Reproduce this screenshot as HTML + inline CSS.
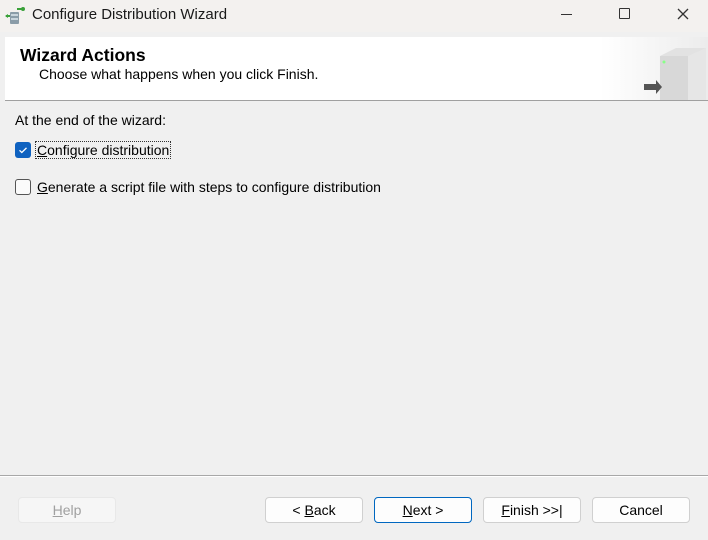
<!DOCTYPE html>
<html><head><style>
*{margin:0;padding:0;box-sizing:border-box}
body{width:708px;height:540px;background:#f0f0f0;font-family:"Liberation Sans",sans-serif;font-size:14px;color:#000;position:relative;overflow:hidden}
.abs{position:absolute}
.title{left:0;top:0;width:708px;height:32px;background:#f3f1ef}
.btn{position:absolute;top:497px;height:26px;width:98px;border:1px solid #d0d0d0;border-radius:4px;background:#fdfdfd;text-align:center;line-height:24px;font-size:14px}
u{text-decoration:underline}
.cb{position:absolute;left:15px;width:16px;height:16px;border-radius:3px}
</style></head><body>
<div class="abs title"></div>
<svg class="abs" style="left:5px;top:6px" width="22" height="20" viewBox="0 0 22 20">
<rect x="5" y="6" width="9" height="12" rx="1" fill="#8a9ca8"/><rect x="6" y="8" width="7" height="2" fill="#c8d4dc"/><rect x="6" y="12" width="7" height="2" fill="#c8d4dc"/>
<path d="M1 10h4M12 3h6" stroke="#3aa13a" stroke-width="2"/><circle cx="18" cy="3" r="2" fill="#3aa13a"/><path d="M0 10l3-2v4z" fill="#3aa13a"/>
</svg>
<div class="abs" style="left:32px;top:6px;font-size:15px;color:#1a1a1a">Configure Distribution Wizard</div>
<div class="abs" style="left:561px;top:14px;width:11px;height:1px;background:#333"></div>
<div class="abs" style="left:619px;top:8px;width:11px;height:11px;border:1.3px solid #333;border-radius:1px"></div>
<svg class="abs" style="left:677px;top:8px" width="12" height="12"><path d="M1 1l10 10M11 1L1 11" stroke="#333" stroke-width="1.3"/></svg>
<div class="abs" style="left:5px;top:37px;width:703px;height:64px;background:#fff;border-bottom:1px solid #a0a0a0"></div>
<div class="abs" style="left:600px;top:37px;width:108px;height:63px;background:linear-gradient(90deg,#fff,#ececec)"></div>
<svg class="abs" style="left:640px;top:42px" width="68" height="58" viewBox="0 0 68 58">
<path d="M20 14l16-8h30v52H20z" fill="#e2e2e2"/><path d="M20 14h28v44H20z" fill="#d8d8d8"/><path d="M48 14l18-8v52H48z" fill="#e6e6e6"/>
<circle cx="24" cy="20" r="1.5" fill="#8f8"/><path d="M4 48l0-6h12v-4l6 7-6 7v-4z" fill="#555"/>
</svg>
<div class="abs" style="left:20px;top:45px;font-size:17.5px;font-weight:bold">Wizard Actions</div>
<div class="abs" style="left:39px;top:66px">Choose what happens when you click Finish.</div>
<div class="abs" style="left:15px;top:112px">At the end of the wizard:</div>
<div class="cb" style="top:142px;background:#0f62c0"><svg width="16" height="16"><path d="M4.5 8.3l2.3 2.2 4.7-4.6" stroke="#fff" stroke-width="1.3" fill="none"/></svg></div>
<div class="abs" style="left:35px;top:141px;border:1px dotted #333;padding:0 1px;height:18px;line-height:16px"><u>C</u>onfigure distribution</div>
<div class="cb" style="top:179px;border:1px solid #555;background:#fbfbfb"></div>
<div class="abs" style="left:37px;top:179px"><u>G</u>enerate a script file with steps to configure distribution</div>
<div class="abs" style="left:0;top:475px;width:708px;height:1px;background:#a8a8a8"></div>
<div class="abs" style="left:0;top:476px;width:708px;height:1px;background:#fff"></div>
<div class="btn" style="left:18px;border-color:#e8e8e8;background:#f6f6f6;color:#a0a0a0"><u>H</u>elp</div>
<div class="btn" style="left:265px">&lt; <u>B</u>ack</div>
<div class="btn" style="left:374px;border-color:#0067c0"><u>N</u>ext &gt;</div>
<div class="btn" style="left:483px"><u>F</u>inish &gt;&gt;|</div>
<div class="btn" style="left:592px">Cancel</div>
</body></html>
